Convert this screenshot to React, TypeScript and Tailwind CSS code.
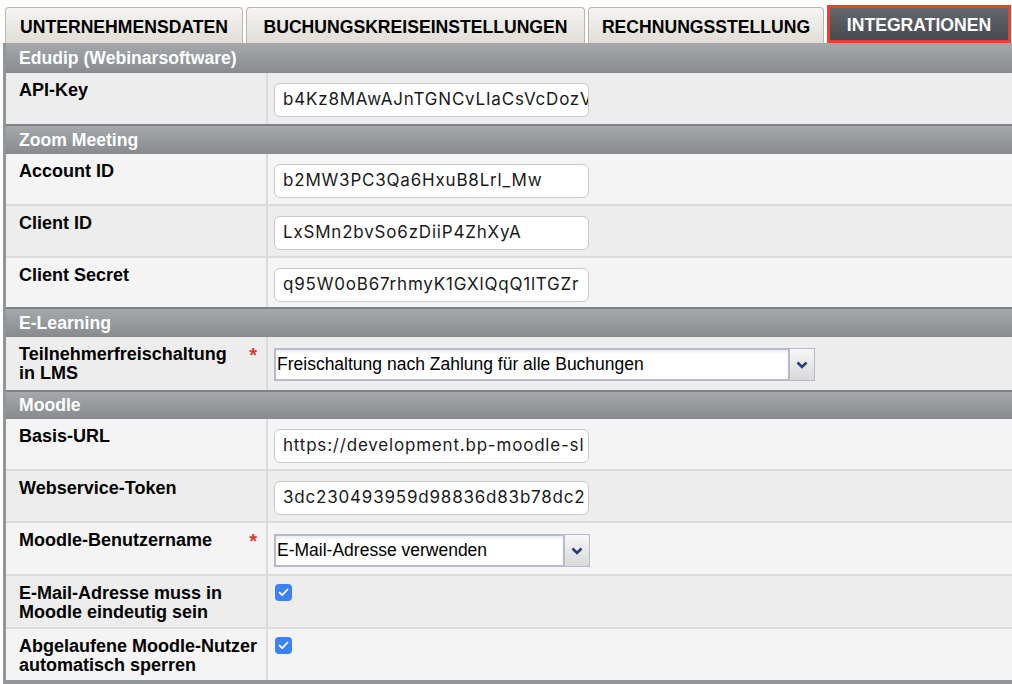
import React from "react";

type Field =
  | { kind: "input"; value: string }
  | { kind: "select"; value: string; width: string }
  | { kind: "check" };

type Row = { label: React.ReactNode; field: Field; h: string; required?: boolean };
type Section = { title: string; h: string; rows: Row[] };

const sections: Section[] = [
  {
    title: "Edudip (Webinarsoftware)",
    h: "h-[30px]",
    rows: [{ label: "API-Key", field: { kind: "input", value: "b4Kz8MAwAJnTGNCvLIaCsVcDozV" }, h: "h-[51px]" }],
  },
  {
    title: "Zoom Meeting",
    h: "h-[30px]",
    rows: [
      { label: "Account ID", field: { kind: "input", value: "b2MW3PC3Qa6HxuB8Lrl_Mw" }, h: "h-[50px]" },
      { label: "Client ID", field: { kind: "input", value: "LxSMn2bvSo6zDiiP4ZhXyA" }, h: "h-[52px]" },
      { label: "Client Secret", field: { kind: "input", value: "q95W0oB67rhmyK1GXlQqQ1lTGZr" }, h: "h-[51px]" },
    ],
  },
  {
    title: "E-Learning",
    h: "h-[30px]",
    rows: [
      {
        label: (
          <>
            Teilnehmerfreischaltung
            <br />
            in LMS
          </>
        ),
        field: { kind: "select", value: "Freischaltung nach Zahlung für alle Buchungen", width: "w-[516px]" },
        h: "h-[53px]",
        required: true,
      },
    ],
  },
  {
    title: "Moodle",
    h: "h-[29px]",
    rows: [
      { label: "Basis-URL", field: { kind: "input", value: "https://development.bp-moodle-sl" }, h: "h-[50px]" },
      { label: "Webservice-Token", field: { kind: "input", value: "3dc230493959d98836d83b78dc2" }, h: "h-[52px]" },
      {
        label: "Moodle-Benutzername",
        field: { kind: "select", value: "E-Mail-Adresse verwenden", width: "w-[291px]" },
        h: "h-[53px]",
        required: true,
      },
      {
        label: (
          <>
            E-Mail-Adresse muss in
            <br />
            Moodle eindeutig sein
          </>
        ),
        field: { kind: "check" },
        h: "h-[53px]",
      },
      {
        label: (
          <>
            Abgelaufene Moodle-Nutzer
            <br />
            automatisch sperren
          </>
        ),
        field: { kind: "check" },
        h: "h-[53px]",
      },
    ],
  },
];

function FieldCell({ field }: { field: Field }) {
  if (field.kind === "input") {
    return (
      <div className="pt-[10px] pl-[6px]">
        <div className="w-[315px] h-[34px] rounded-[6px] border border-[#c9c9c9] bg-white pl-[8px] overflow-hidden whitespace-nowrap flex items-center text-[17px] tracking-[0.8px] text-[#1a1a1a] font-['Inter',sans-serif]">
          {field.value}
        </div>
      </div>
    );
  }
  if (field.kind === "select") {
    return (
      <div className="pt-[11px] pl-[6px]">
        <div className="flex h-[33px]">
          <div
            className={`${field.width} h-full border-2 border-[#b7bacb] bg-white pl-[1px] flex items-center text-[17.5px] text-black whitespace-nowrap shadow-[inset_0_2px_3px_rgba(0,0,0,0.08)]`}
          >
            {field.value}
          </div>
          <div className="w-[25px] h-full border border-l-0 border-[#b7bacb] bg-gradient-to-b from-[#f7f7f7] to-[#d9d9d9] flex items-center justify-center">
            <svg width="12" height="8" viewBox="0 0 12 8">
              <polyline points="1.5,1.5 6,6 10.5,1.5" fill="none" stroke="#263b78" strokeWidth="2.6" />
            </svg>
          </div>
        </div>
      </div>
    );
  }
  return (
    <div className="pt-[8px] pl-[7px]">
      <div className="w-[17px] h-[17px] rounded-[4px] bg-[#3b82f6] flex items-center justify-center">
        <svg width="11" height="9" viewBox="0 0 11 9">
          <polyline points="1.5,4.5 4.2,7.2 9.5,1.5" fill="none" stroke="white" strokeWidth="1.8" strokeLinecap="round" strokeLinejoin="round" />
        </svg>
      </div>
    </div>
  );
}

const tabs = ["UNTERNEHMENSDATEN", "BUCHUNGSKREISEINSTELLUNGEN", "RECHNUNGSSTELLUNG"];
const tabWidths = ["w-[238px]", "w-[339px]", "w-[236px]"];

export default function App() {
  let n = 0;
  return (
    <div className="w-[1012px] h-[684px] bg-white overflow-hidden font-['Liberation_Sans',Arial,sans-serif]">
      {/* tabs */}
      <div className="flex items-end h-[43px] pl-[5px] gap-[3px]">
        {tabs.map((t, i) => (
          <div
            key={t}
            className={`${tabWidths[i]} h-[36px] pt-[3px] rounded-t-[4px] border border-b-0 border-[#b5b5b5] bg-gradient-to-b from-[#f6f5f2] to-[#e0ddd7] flex items-center justify-center text-[17.6px] font-bold text-black`}
          >
            {t}
          </div>
        ))}
        <div className="w-[184px] h-[38px] pt-[2px] border-[3px] border-[#e8412c] bg-gradient-to-b from-[#64686c] to-[#474b4f] flex items-center justify-center text-[17.6px] font-bold text-white">
          INTEGRATIONEN
        </div>
      </div>

      {/* panel */}
      <div className="ml-[3px] border-l-[3px] border-b-[4px] border-[#939699]">
        {sections.map((s, si) => (
          <div key={s.title}>
            <div
              className={`${s.h} ${si === 0 ? "" : "border-t-2 border-[#7f8285]"} bg-gradient-to-b from-[#a6a9ab] to-[#888b8e] pl-[13px] flex items-center text-[17.6px] font-bold text-white`}
            >
              {s.title}
            </div>
            {s.rows.map((r, ri) => {
              n++;
              return (
                <div
                  key={ri}
                  className={`flex ${r.h} ${ri > 0 ? "border-t-2 border-[#dcdcdc]" : ""} ${n % 2 === 1 ? "bg-[#ededed]" : "bg-[#f4f4f4]"}`}
                >
                  <div className="w-[262px] shrink-0 border-r-2 border-[#dcdcdc] pl-[13px] pr-[9px] pt-[8px] flex justify-between">
                    <div className="text-[18px] leading-[19px] font-bold text-black">{r.label}</div>
                    {r.required && <span className="text-[#dc3a2e] text-[20px] font-bold leading-[20px]">*</span>}
                  </div>
                  <FieldCell field={r.field} />
                </div>
              );
            })}
          </div>
        ))}
      </div>
    </div>
  );
}
